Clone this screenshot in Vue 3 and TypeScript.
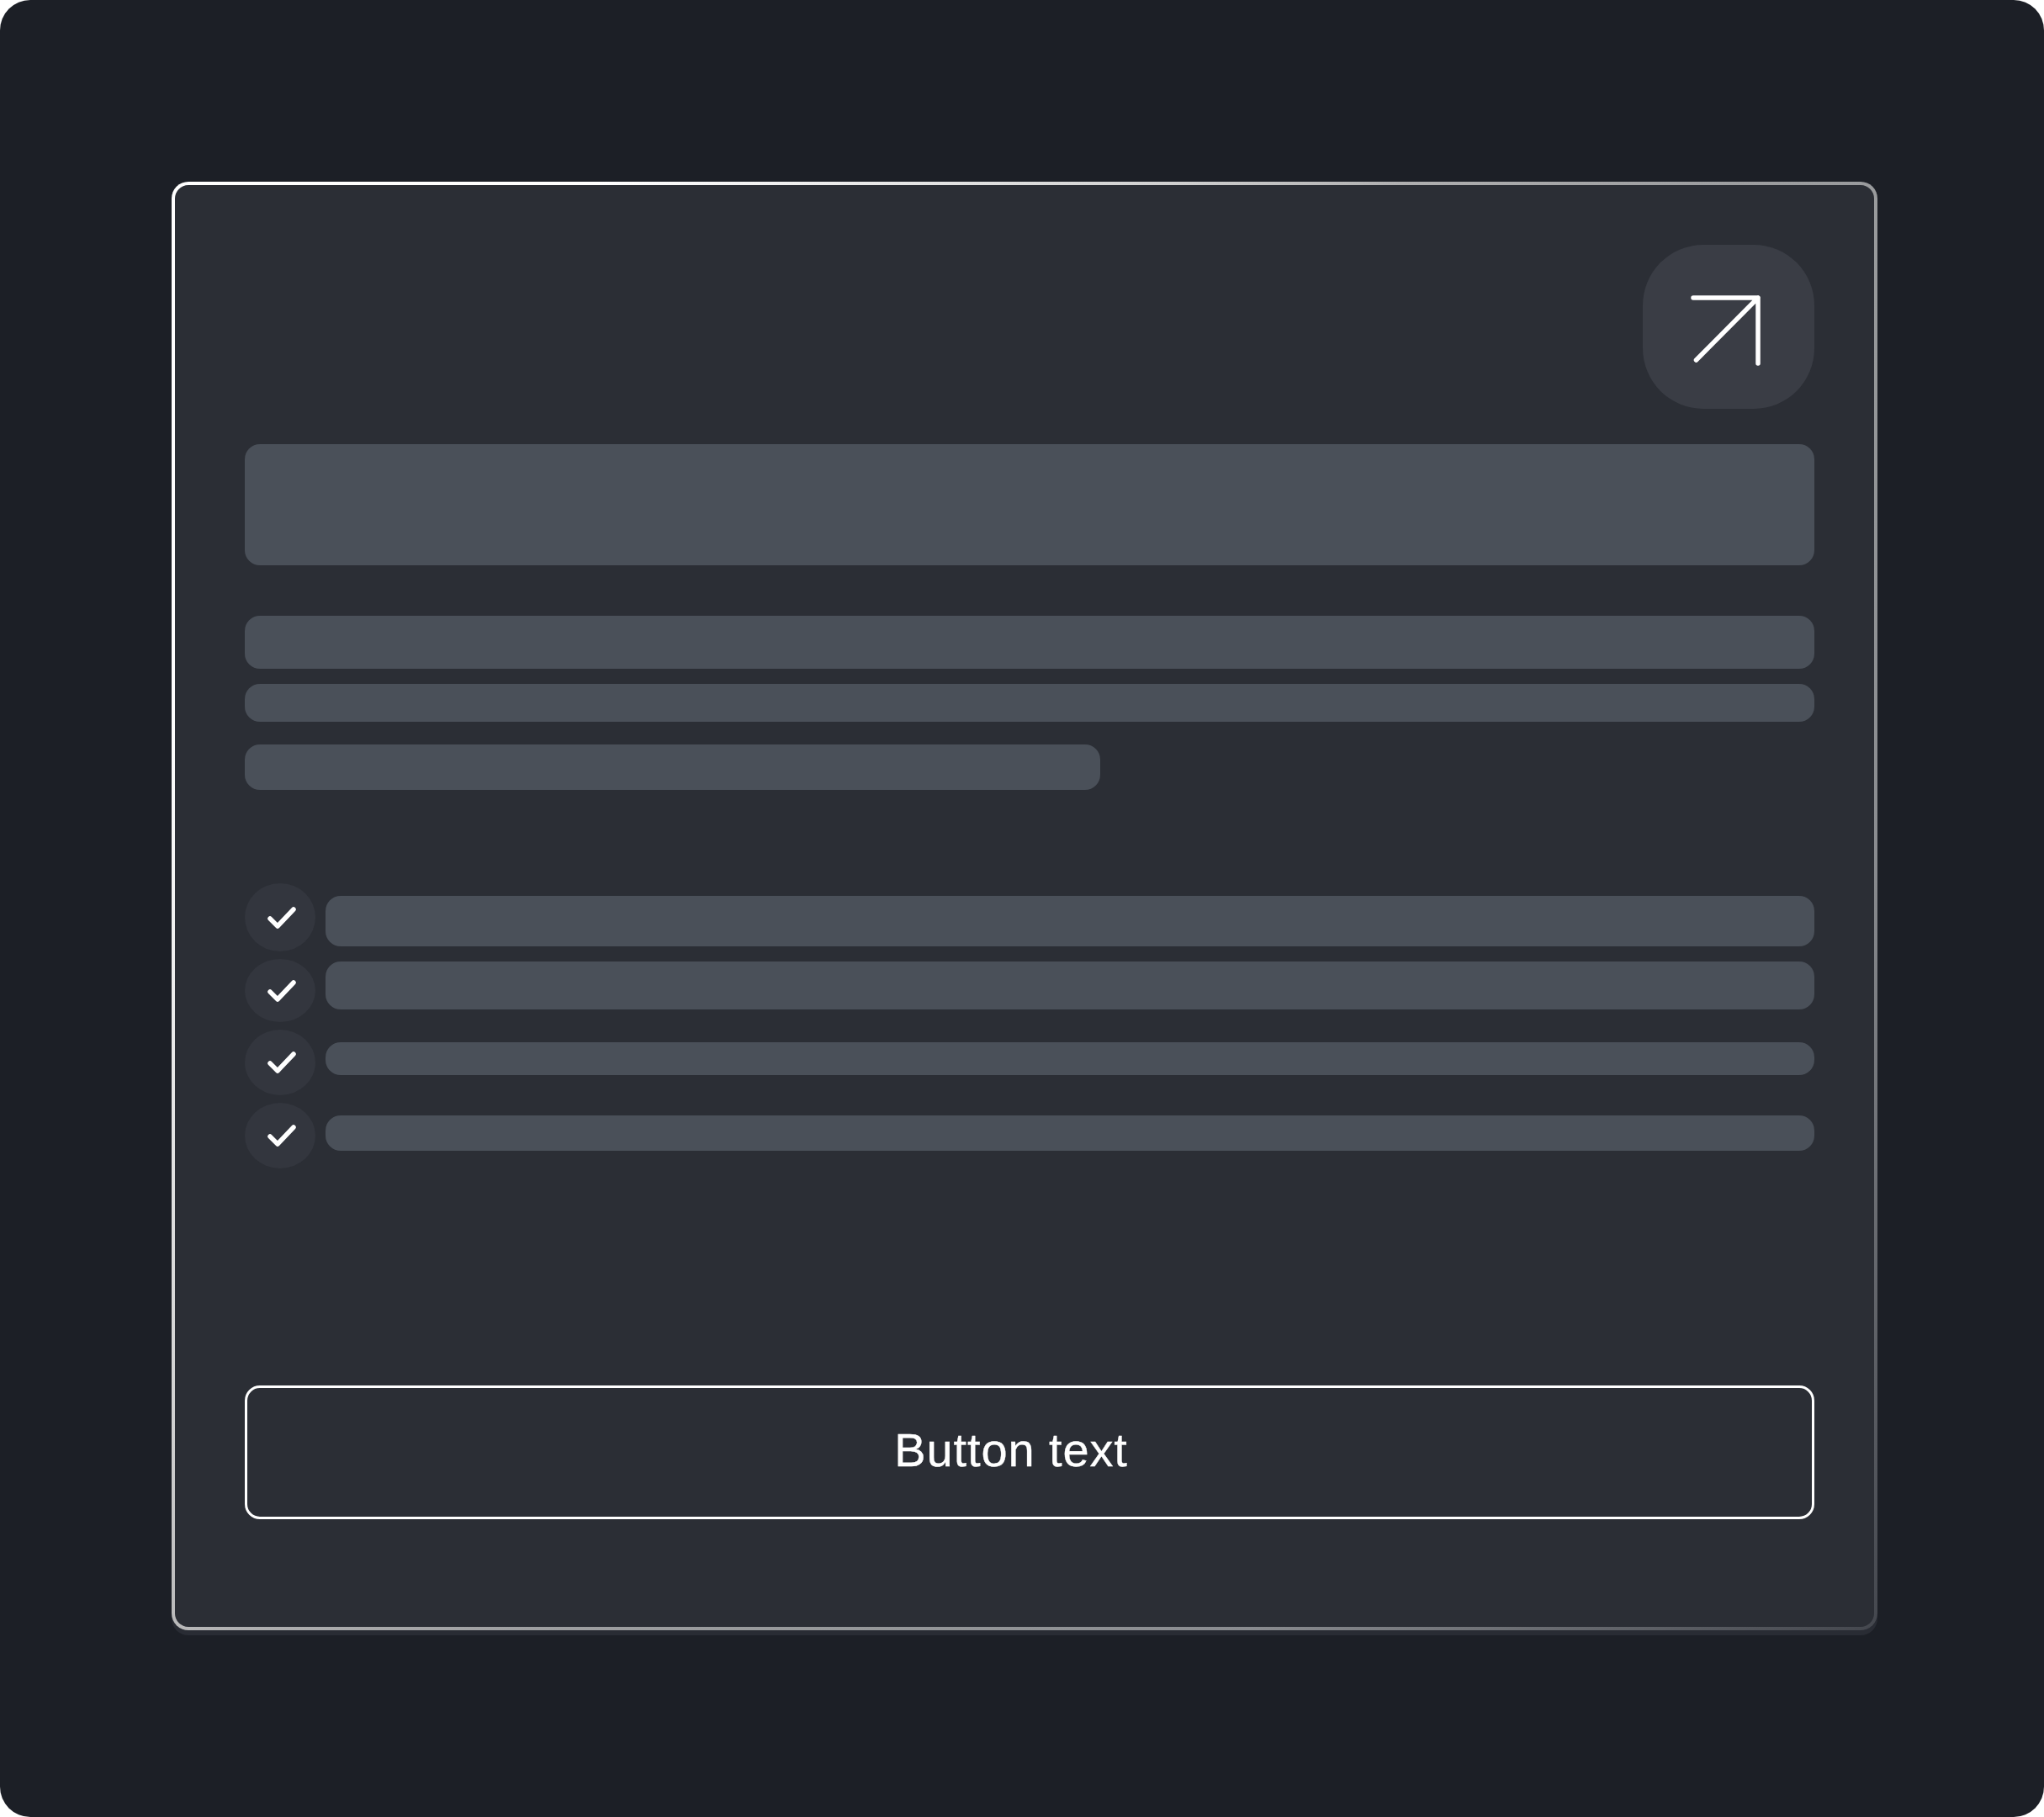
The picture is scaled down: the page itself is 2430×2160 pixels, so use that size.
<script setup lang="ts">
interface CheckRow {
  circle: number;
  barTop: number;
  bar: number;
}

const checkRows: CheckRow[] = [
  { circle: 81, barTop: 15, bar: 60 },
  { circle: 75, barTop: 3, bar: 57 },
  { circle: 78, barTop: 15, bar: 39 },
  { circle: 78, barTop: 15, bar: 42 },
];
</script>

<template>
  <div class="screen">
    <section class="card">
      <div class="card-head">
        <button class="open-btn" type="button" aria-label="Open">
          <svg class="icon" width="88" height="88" viewBox="0 0 88 88" fill="none">
            <path d="M2 9H79V87M79 9L5.500 83" stroke="#fff" stroke-width="5.500" stroke-linecap="round" stroke-linejoin="round" />
          </svg>
        </button>
      </div>

      <div class="bar title-bar"></div>

      <div class="bar line-one"></div>
      <div class="bar line-two"></div>
      <div class="bar line-three"></div>

      <ul class="checks">
        <li v-for="(row, i) in checkRows" :key="i" class="check-row">
          <span class="check-dot" :style="{ height: row.circle + 'px' }">
            <svg class="icon" width="36" height="28" viewBox="0 0 36 28" fill="none">
              <path d="M6 15L15 24L34 4" stroke="#fff" stroke-width="5.500" stroke-linecap="round" stroke-linejoin="round" />
            </svg>
          </span>
          <div class="bar check-bar" :style="{ height: row.bar + 'px', marginTop: row.barTop + 'px' }"></div>
        </li>
      </ul>

      <button class="action" type="button"><span>Button text</span></button>
    </section>
  </div>
</template>

<style>
html,
body {
  background: #fff;
}
</style>

<style scoped>
.screen {
  width: 2430px;
  height: 2160px;
  box-sizing: border-box;
  padding: 216px 198px 0 204px;
  background: #1c1f26;
  border-radius: 36px;
}

.card {
  box-sizing: border-box;
  height: 1722px;
  padding: 71px 71px 0 83px;
  border: 4px solid transparent;
  border-radius: 20px;
  background:
    linear-gradient(#2b2e35, #2b2e35) padding-box,
    linear-gradient(128.7deg, #fff 15%, #d0d0d0 35%, #afafb0 43%, #9e9fa1 53%, #96989a 64%, #8a8c90 78%, #44474e 100%) border-box;
  box-shadow: 0 6px 0 #292c34;
}

.card-head {
  display: flex;
  justify-content: flex-end;
}

.icon {
  overflow: visible;
}

.open-btn {
  display: flex;
  align-items: center;
  justify-content: center;
  width: 204px;
  height: 195px;
  padding: 0;
  border: 0;
  border-radius: 72px;
  background: #3a3d45;
}

.bar {
  background: #4a5059;
  border-radius: 18px;
}

.title-bar {
  height: 144px;
  margin-top: 42px;
}

.line-one {
  height: 63px;
  margin-top: 60px;
}

.line-two {
  height: 45px;
  margin-top: 18px;
}

.line-three {
  width: 1017px;
  height: 54px;
  margin-top: 27px;
}

.checks {
  display: flex;
  flex-direction: column;
  gap: 9px;
  margin: 111px 0 0;
  padding: 0;
  list-style: none;
}

.check-row {
  display: flex;
  align-items: flex-start;
  gap: 12px;
}

.check-dot {
  flex: none;
  display: flex;
  align-items: center;
  justify-content: center;
  width: 84px;
  background: #33363e;
  border-radius: 50%;
}

.check-bar {
  flex: 1;
}

.action {
  display: flex;
  align-items: center;
  justify-content: center;
  box-sizing: border-box;
  width: 100%;
  height: 159px;
  margin-top: 258px;
  padding: 0 44px 7px 0;
  border: 3px solid #fff;
  border-radius: 18px;
  background: #2b2e35;
  color: #fff;
  font-family: "Liberation Sans", Arial, sans-serif;
  font-size: 56px;
  letter-spacing: 0.9px;
  -webkit-text-stroke: 0.3px #fff;
}
</style>
